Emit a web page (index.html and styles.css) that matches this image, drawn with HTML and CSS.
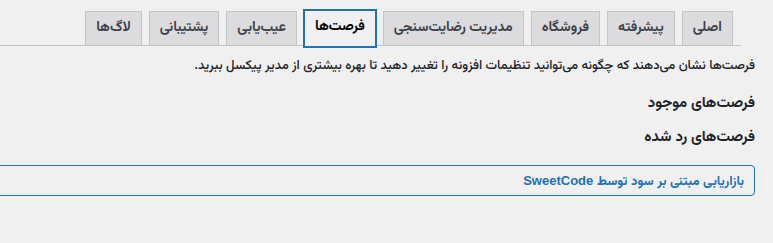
FILE: index.html
```html
<!DOCTYPE html>
<html lang="fa" dir="rtl">
<head>
<meta charset="utf-8">
<link rel="stylesheet" href="styles.css">
</head>
<body>
<div class="wrap">
  <nav class="tabs">
    <a class="tab">اصلی</a>
    <a class="tab">پیشرفته</a>
    <a class="tab">فروشگاه</a>
    <a class="tab">مدیریت رضایت‌سنجی</a>
    <a class="tab active">فرصت‌ها</a>
    <a class="tab">عیب‌یابی</a>
    <a class="tab">پشتیبانی</a>
    <a class="tab">لاگ‌ها</a>
  </nav>
  <p class="desc">فرصت‌ها نشان می‌دهند که چگونه می‌توانید تنظیمات افزونه را تغییر دهید تا بهره بیشتری از مدیر پیکسل ببرید.</p>
  <h2 class="heading">فرصت‌های موجود</h2>
  <h2 class="heading">فرصت‌های رد شده</h2>
  <div class="promo">بازاریابی مبتنی بر سود توسط SweetCode</div>
</div>
</body>
</html>
```

FILE: styles.css
```css
html, body {
  margin: 0;
  padding: 0;
  background: #f0f0f1;
}
body {
  direction: rtl;
  font-family: "Vazirmatn", "Noto Sans Arabic", "DejaVu Sans Condensed", "DejaVu Sans", sans-serif;
  color: #1d2327;
}
.wrap {
  padding-right: 18px;
}
.tabs {
  display: flex;
  gap: 7px;
  margin-right: 14px;
  padding-top: 11px;
  padding-right: 8px;
  border-bottom: 1px solid #c3c4c7;
  height: 34px;
  box-sizing: content-box;
}
.tab {
  display: block;
  height: 34px;
  box-sizing: border-box;
  padding: 0 10px;
  line-height: 32px;
  font-size: 14px;
  font-weight: bold;
  color: #3c434a;
  background: #dcdcde;
  border: 1px solid #c3c4c7;
  border-bottom: none;
  white-space: nowrap;
}
.tab.active {
  background: #f0f0f1;
  color: #000;
  border: 1px solid #2271b1;
  box-shadow: 0 0 0 1px #2271b1;
  height: 37px;
  margin-top: -1px;
}
.desc {
  margin: 10px 0 0;
  font-size: 13px;
  line-height: 20px;
  font-weight: 500;
  color: #1d2327;
}
.heading {
  margin: 18px 0 0;
  font-size: 15px;
  line-height: 20px;
  font-weight: bold;
  color: #1d2327;
}
.heading + .heading {
  margin-top: 14px;
}
.promo {
  margin: 17px 0 0 -20px;
  height: 31px;
  box-sizing: border-box;
  border: 1px solid #2271b1;
  border-radius: 4px;
  padding: 0 10px;
  line-height: 29px;
  font-family: "Liberation Sans", "Vazirmatn", "Noto Sans Arabic", "DejaVu Sans Condensed", "DejaVu Sans", sans-serif;
  font-size: 13px;
  font-weight: bold;
  color: #2271b1;
}
```
